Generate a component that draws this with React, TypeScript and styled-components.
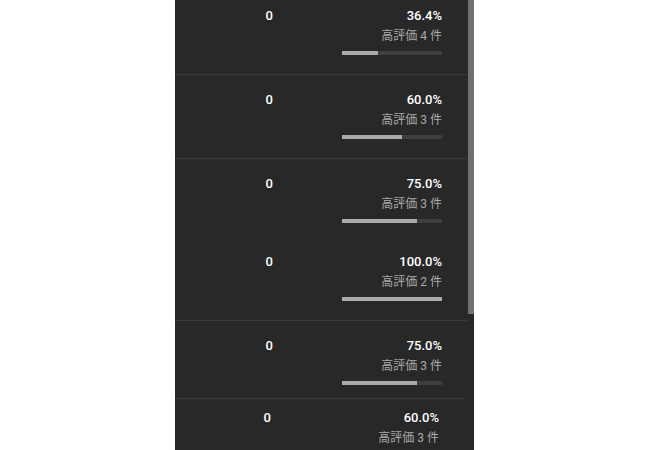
import React from "react";
import styled, { createGlobalStyle } from "styled-components";

const Global = createGlobalStyle`
  html, body {
    margin: 0;
    padding: 0;
    background: #ffffff;
    overflow: hidden;
  }
  body {
    font-family: Roboto, "Noto Sans CJK JP", sans-serif;
  }
`;

const Panel = styled.div`
  position: relative;
  width: 299px;
  height: 450px;
  margin-left: 175px;
  background: #282828;
  overflow: hidden;
`;

const List = styled.div`
  width: 292px;
  display: flex;
  flex-direction: column;
`;

const Row = styled.div<{ $top: number; $bottom: number; $line: boolean; $inset: boolean }>`
  display: flex;
  align-items: flex-start;
  border-top: 1px solid ${(p) => (p.$line ? "#3a3a3a" : "transparent")};
  padding: ${(p) => p.$top}px 25px ${(p) => p.$bottom}px 0;
  margin-right: ${(p) => (p.$inset ? 3 : 0)}px;
`;

const CountCell = styled.div<{ $inset: boolean }>`
  width: ${(p) => (p.$inset ? 96 : 98)}px;
  flex: none;
  text-align: right;
  font-size: 13px;
  line-height: 16px;
  font-weight: 500;
  color: #ffffff;
`;

const RateCell = styled.div`
  flex: 1;
  display: flex;
  flex-direction: column;
  align-items: flex-end;
`;

const Rate = styled.div`
  font-size: 13px;
  line-height: 16px;
  font-weight: 500;
  color: #ffffff;
`;

const Likes = styled.div`
  margin-top: 4px;
  font-size: 12px;
  line-height: 16px;
  color: #aaaaaa;
  white-space: nowrap;
`;

const Track = styled.div`
  margin-top: 7px;
  width: 100px;
  height: 4px;
  background: #3f3f3f;
  display: flex;
`;

const Fill = styled.div`
  height: 100%;
  background: #aaaaaa;
`;

const Thumb = styled.div`
  position: absolute;
  top: 0;
  right: 0;
  width: 6px;
  height: 314px;
  background: #717171;
`;

type Item = {
  rate: number;
  likes: number;
  top: number;
  bottom: number;
  line: boolean;
  inset?: boolean;
};

const items: Item[] = [
  { rate: 36.4, likes: 4, top: 7, bottom: 19, line: false },
  { rate: 60.0, likes: 3, top: 17, bottom: 19, line: true },
  { rate: 75.0, likes: 3, top: 17, bottom: 13, line: true },
  { rate: 100.0, likes: 2, top: 17, bottom: 19, line: false },
  { rate: 75.0, likes: 3, top: 17, bottom: 13, line: true },
  { rate: 60.0, likes: 3, top: 11, bottom: 19, line: true, inset: true },
];

export default function App() {
  return (
    <>
      <Global />
      <Panel>
        <List>
          {items.map((it, i) => (
            <Row
              key={i}
              $top={it.top}
              $bottom={it.bottom}
              $line={it.line}
              $inset={!!it.inset}
            >
              <CountCell $inset={!!it.inset}>0</CountCell>
              <RateCell>
                <Rate>{it.rate.toFixed(1)}%</Rate>
                <Likes>高評価 {it.likes} 件</Likes>
                <Track>
                  <Fill style={{ width: `${it.rate}%` }} />
                </Track>
              </RateCell>
            </Row>
          ))}
        </List>
        <Thumb />
      </Panel>
    </>
  );
}
